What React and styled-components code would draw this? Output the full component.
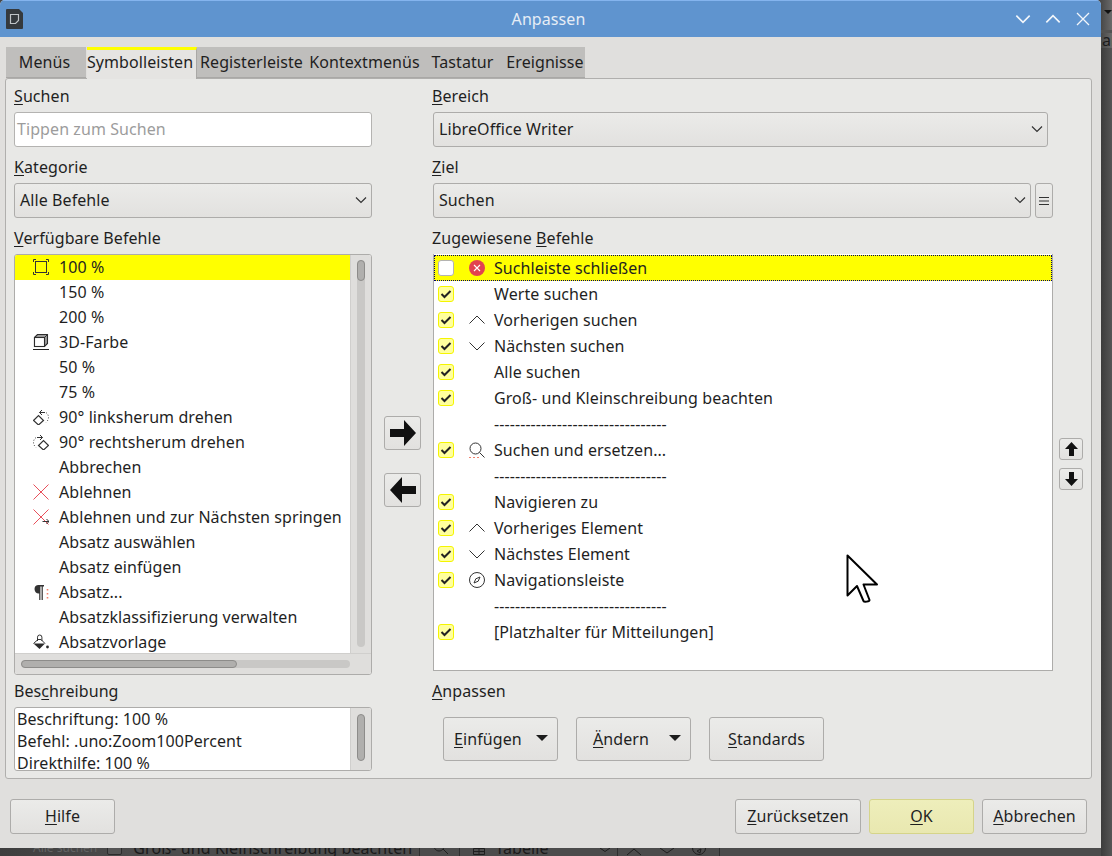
import React from 'react';
import styled, { createGlobalStyle } from 'styled-components';

const GlobalStyle = createGlobalStyle`
  html, body {
    margin: 0;
    padding: 0;
    width: 1112px;
    height: 856px;
    overflow: hidden;
    background: #474747;
    font-family: "Noto Sans", sans-serif;
    font-size: 16px;
    letter-spacing: 0.08px;
    color: #1f1f1f;
  }
`;

const Desktop = styled.div`
  display: grid;
  grid-template-columns: 1101px 11px;
  grid-template-rows: 848px 8px;
  width: 1112px;
  height: 856px;
  overflow: hidden;
`;

const Win = styled.div`
  display: flex;
  flex-direction: column;
  background: #e0dfdd;
  border-radius: 5px 5px 0 0;
  overflow: hidden;
`;

const TitleBar = styled.div`
  display: grid;
  grid-template-columns: 1fr auto 1fr;
  align-items: center;
  height: 37px;
  box-sizing: border-box;
  background: #5f94cf;
  border-top: 1px solid #84b4ee;
  padding: 0 10px 0 6px;
  color: #e6edf6;
`;

const TitleControls = styled.div`
  display: flex;
  justify-content: flex-end;
  gap: 14px;
`;

const Content = styled.div`
  flex: 1;
  display: flex;
  flex-direction: column;
  padding: 10px 9px 0 5px;
`;

const TabRow = styled.div`
  display: flex;
  height: 31px;
  padding-left: 1px;
  position: relative;
  z-index: 1;
`;

const Tab = styled.div`
  width: ${(p) => p.$w}px;
  height: ${(p) => (p.$active ? 32 : 31)}px;
  box-sizing: border-box;
  display: flex;
  justify-content: center;
  line-height: 28px;
  white-space: nowrap;
  background: ${(p) => (p.$active ? '#e5e4e2' : '#bfbebc')};
  border-top: ${(p) => (p.$active ? '3px solid #ffff00' : '0')};
  border-bottom: ${(p) => (p.$active ? '0' : '1px solid #a9a8a6')};
  border-right: ${(p) => (p.$active ? '1px solid #a9a8a6' : '0')};
  ${(p) => (p.$active ? 'line-height: 25px; margin-left: 1px;' : 'padding-top: 1px;')}
  padding-right: ${(p) => p.$nudge || 0}px;
  padding-left: ${(p) => p.$nudgeRight || 0}px;
`;

const Panel = styled.div`
  height: 701px;
  box-sizing: border-box;
  display: grid;
  grid-template-columns: 358px 60px 621px 38px;
  padding: 7px 0 0 8px;
  background: #e8e8e6;
  border: 1px solid #b0afad;
  border-radius: 3px;
`;

const Column = styled.div`
  display: flex;
  flex-direction: column;
  min-width: 0;
`;

const FieldLabel = styled.div`
  height: 20px;
  line-height: 20px;
  margin-top: ${(p) => p.$top ?? 10}px;
  margin-bottom: 6px;
`;

const Key = styled.span`
  text-decoration: underline;
  text-underline-offset: 2px;
  text-decoration-thickness: 1px;
`;

const SearchInput = styled.div`
  height: 35px;
  box-sizing: border-box;
  display: flex;
  align-items: center;
  padding: 0 0 2px 2px;
  background: #fff;
  border: 1px solid #b4b3b1;
  border-radius: 3px;
  color: #9c9c9c;
`;

const SelectRow = styled.div`
  display: flex;
  gap: 4px;
  margin-left: ${(p) => p.$indent || 0}px;
`;

const Select = styled.div`
  width: ${(p) => p.$w}px;
  height: 35px;
  box-sizing: border-box;
  display: flex;
  align-items: center;
  justify-content: space-between;
  padding: 0 4px 2px 5px;
  background: linear-gradient(#ebebe9, #e2e1df);
  border: 1px solid #adacaa;
  border-radius: 3px;
`;

const MenuButton = styled.div`
  width: 18px;
  height: 35px;
  box-sizing: border-box;
  display: flex;
  align-items: center;
  justify-content: center;
  background: linear-gradient(#ebebe9, #e2e1df);
  border: 1px solid #adacaa;
  border-radius: 3px;
`;

const CommandList = styled.div`
  height: 421px;
  box-sizing: border-box;
  display: flex;
  flex-direction: column;
  background: #fff;
  border: 1px solid #adacaa;
  border-radius: 3px;
  overflow: hidden;
`;

const ListBody = styled.div`
  flex: 1;
  display: flex;
  min-height: 0;
`;

const Rows = styled.div`
  flex: 1;
  min-width: 0;
  overflow: hidden;
`;

const CommandRow = styled.div`
  height: 25px;
  box-sizing: border-box;
  display: flex;
  align-items: center;
  white-space: nowrap;
  padding: 0 0 2px 18px;
  background: ${(p) => (p.$selected ? '#ffff00' : 'transparent')};
`;

const IconSlot = styled.span`
  width: 16px;
  height: 16px;
  flex: none;
  margin-right: 10px;
  display: flex;
  color: #333;
`;

const VTrack = styled.div`
  width: 21px;
  flex: none;
  box-sizing: border-box;
  padding: ${(p) => p.$pad || '5px 6px 6px'};
  background: #dfdedc;
  border-left: 1px solid #d0cfcd;
`;

const VGroove = styled.div`
  height: 100%;
  background: #c9c8c6;
  border-radius: 4px;
`;

const VThumb = styled.div`
  height: ${(p) => p.$h};
  box-sizing: border-box;
  background: #b0afad;
  border: 1px solid #8d8c8a;
  border-radius: 4px;
`;

const HTrack = styled.div`
  height: 21px;
  flex: none;
  box-sizing: border-box;
  padding: 6px 21px 6px 6px;
  background: #dfdedc;
  border-top: 1px solid #d0cfcd;
`;

const HGroove = styled.div`
  height: 100%;
  background: #c9c8c6;
  border-radius: 4px;
`;

const HThumb = styled.div`
  width: 216px;
  height: 100%;
  box-sizing: border-box;
  background: #b0afad;
  border: 1px solid #8d8c8a;
  border-radius: 4px;
`;

const DescriptionBox = styled.div`
  height: 64px;
  box-sizing: border-box;
  display: flex;
  background: #fff;
  border: 1px solid #adacaa;
  border-radius: 3px;
  overflow: hidden;
`;

const DescriptionText = styled.div`
  flex: 1;
  padding-left: 2px;
  line-height: 22px;
  white-space: nowrap;
  overflow: hidden;
`;

const Mover = styled.div`
  display: flex;
  flex-direction: column;
  gap: 23px;
  padding: 330px 0 0 12px;
`;

const ArrowButton = styled.div`
  width: 37px;
  height: 34px;
  box-sizing: border-box;
  display: flex;
  align-items: center;
  justify-content: center;
  background: linear-gradient(#ebebe9, #e2e1df);
  border: 1px solid #adacaa;
  border-radius: 3px;
`;

const Assigned = styled.div`
  position: relative;
  height: 417px;
  box-sizing: border-box;
  margin-left: 1px;
  padding-top: 1px;
  background: #fff;
  border: 1px solid #adacaa;
  border-top: 0;
  overflow: hidden;
`;

const AssignedRow = styled.div`
  height: 26px;
  box-sizing: border-box;
  display: flex;
  align-items: center;
  white-space: nowrap;
  padding-left: 4px;
  background: ${(p) => (p.$selected ? '#ffff00' : 'transparent')};
  ${(p) => p.$selected && 'outline: 1px dotted #00006a; outline-offset: -1px;'}
`;

const Check = styled.span`
  width: 16px;
  height: 16px;
  flex: none;
  box-sizing: border-box;
  margin-right: 15px;
  display: flex;
  align-items: center;
  justify-content: center;
  border-radius: 3px;
  background: ${(p) => (p.$on ? '#ffff9e' : '#fff')};
  border: 1px solid ${(p) => (p.$on ? '#f5f500' : '#b4b3b1')};
`;

const AssignedIcon = styled(IconSlot)`
  margin-right: 9px;
`;

const Separator = styled.span`
  margin-left: 56px;
`;

const Pointer = styled.svg`
  position: absolute;
  left: 412px;
  top: 300px;
`;

const ActionRow = styled.div`
  display: flex;
  gap: 18px;
  padding: 10px 0 0 11px;
`;

const ActionButton = styled.div`
  width: 115px;
  height: 44px;
  box-sizing: border-box;
  display: flex;
  align-items: center;
  justify-content: ${(p) => (p.$drop ? 'space-between' : 'center')};
  padding: ${(p) => (p.$drop ? `0 9px 0 ${p.$drop}px` : '0')};
  background: linear-gradient(#ebebe9, #e2e1df);
  border: 1px solid #adacaa;
  border-radius: 3px;
`;

const DropCaret = styled.span`
  width: 0;
  height: 0;
  border-left: 6px solid transparent;
  border-right: 6px solid transparent;
  border-top: 6px solid #1c1c1c;
  margin-bottom: 3px;
`;

const SidePad = styled.div`
  display: flex;
  flex-direction: column;
  gap: 8px;
  padding: 352px 0 0 6px;
`;

const SmallButton = styled.div`
  width: 24px;
  height: 22px;
  box-sizing: border-box;
  display: flex;
  align-items: center;
  justify-content: center;
  background: linear-gradient(#ebebe9, #e2e1df);
  border: 1px solid #adacaa;
  border-radius: 3px;
`;

const Footer = styled.div`
  display: flex;
  justify-content: space-between;
  padding: 20px 5px 0 5px;
`;

const FooterGroup = styled.div`
  display: flex;
  gap: 8px;
`;

const FooterButton = styled.div`
  width: ${(p) => p.$w}px;
  height: 35px;
  box-sizing: border-box;
  display: flex;
  align-items: center;
  justify-content: center;
  padding-bottom: 2px;
  background: ${(p) => (p.$primary ? 'linear-gradient(#eeeebb, #e9e8b0)' : 'linear-gradient(#ebebe9, #e2e1df)')};
  border: 1px solid ${(p) => (p.$primary ? '#d5d48a' : '#adacaa')};
  border-radius: 3px;
`;

const SideStrip = styled.div`
  grid-row: 1 / 3;
  grid-column: 2;
  display: flex;
  flex-direction: column;
  background: linear-gradient(90deg, #3c3c3c, #555);
  overflow: hidden;
`;

const SideTop = styled.div`
  height: 30px;
  background: linear-gradient(90deg, #484848, #6a6a6a);
  display: flex;
  justify-content: flex-end;
  padding: 10px 0 0 0;
  box-sizing: border-box;
`;

const SideCaret = styled.span`
  width: 0;
  height: 0;
  border-left: 4px solid transparent;
  border-right: 4px solid transparent;
  border-top: 4px solid #111;
`;

const SideBar = styled.div`
  height: 18px;
  box-sizing: border-box;
  background: linear-gradient(90deg, #484848, #6a6a6a);
  border-top: 3px solid #525252;
  color: #1c1c1c;
  line-height: 15px;
  padding-left: 1px;
  white-space: nowrap;
`;

const BottomStrip = styled.div`
  grid-row: 2;
  grid-column: 1;
  display: flex;
  align-items: flex-start;
  background: linear-gradient(90deg, #3e3e3e, #4c4c4c 12%, #4c4c4c);
  overflow: hidden;
  white-space: nowrap;
  color: #1a1a1a;
`;

const StripItem = styled.span`
  flex: none;
  display: flex;
  margin-left: ${(p) => p.$left}px;
  margin-top: ${(p) => p.$top ?? -11}px;
  line-height: 22px;
  ${(p) => p.$faded && 'color: #636363; font-size: 12px; letter-spacing: 0;'}
`;

const StripBox = styled.span`
  width: 15px;
  height: 16px;
  flex: none;
  box-sizing: border-box;
  margin: -9px 0 0 10px;
  background: #555;
  border: 1px solid #2c2c2c;
  border-radius: 2px;
`;

const StripDivider = styled.span`
  width: 1px;
  height: 8px;
  flex: none;
  margin-left: ${(p) => p.$left}px;
  background: #2f2f2f;
`;

const commands = [
  ['100 %', 'zoom'],
  ['150 %'],
  ['200 %'],
  ['3D-Farbe', 'cube'],
  ['50 %'],
  ['75 %'],
  ['90° linksherum drehen', 'rotl'],
  ['90° rechtsherum drehen', 'rotr'],
  ['Abbrechen'],
  ['Ablehnen', 'reject'],
  ['Ablehnen und zur Nächsten springen', 'rejectNext'],
  ['Absatz auswählen'],
  ['Absatz einfügen'],
  ['Absatz...', 'para'],
  ['Absatzklassifizierung verwalten'],
  ['Absatzvorlage', 'bucket'],
];

const DASHES = '-'.repeat(33);

const assigned = [
  { text: 'Suchleiste schließen', icon: 'closeRed', off: true },
  { text: 'Werte suchen' },
  { text: 'Vorherigen suchen', icon: 'up' },
  { text: 'Nächsten suchen', icon: 'down' },
  { text: 'Alle suchen' },
  { text: 'Groß- und Kleinschreibung beachten' },
  { sep: true },
  { text: 'Suchen und ersetzen...', icon: 'search' },
  { sep: true },
  { text: 'Navigieren zu' },
  { text: 'Vorheriges Element', icon: 'up' },
  { text: 'Nächstes Element', icon: 'down' },
  { text: 'Navigationsleiste', icon: 'compass' },
  { sep: true },
  { text: '[Platzhalter für Mitteilungen]' },
];

function Icon({ name }) {
  const line = { fill: 'none', stroke: '#333', strokeWidth: 1 };
  const red = { fill: 'none', stroke: '#e8505b', strokeWidth: 1 };
  const dotted = { fill: 'none', stroke: '#444', strokeWidth: 1, strokeDasharray: '1 1.8' };
  const body = {
    zoom: (
      <>
        <rect x="2.5" y="2.5" width="11" height="11" {...line} />
        <path d="M.5 3V.5H3M13 .5h2.5V3M15.5 13v2.5H13M3 15.5H.5V13" {...line} />
      </>
    ),
    cube: (
      <>
        <path d="M1.5 3.5l3-3h10v9l-3 3h-10z" fill="#9c9c9c" stroke="#2c2c2c" strokeWidth="1.1" />
        <rect x="1.5" y="3.5" width="10" height="9" fill="#fff" stroke="#2c2c2c" strokeWidth="1.1" />
        <path d="M11.5 3.5l3-3" {...line} />
        <path d="M0 15.5h16" fill="none" stroke="#222" strokeWidth="1.1" />
      </>
    ),
    rotl: (
      <>
        <path d="M.5 11.5 5.5 6.5l5 5-5 4.5z" fill="none" stroke="#333" strokeWidth="1.2" />
        <path d="M13 3.5C15 5 15.5 7 15.5 8.5 15.5 10.5 14.5 12 13 13.5" {...dotted} />
        <path d="M12 3.5H6.5M9 1 6.5 3.5 9 6" {...line} />
      </>
    ),
    rotr: (
      <>
        <path d="M15.5 11.5 10.5 6.5l-5 5 5 4.5z" fill="none" stroke="#333" strokeWidth="1.2" />
        <path d="M3 3.5C1 5 .5 7 .5 8.5.5 10.5 1.5 12 3 13.5" {...dotted} />
        <path d="M4 3.5h5.5M7 1l2.5 2.5L7 6" {...line} />
      </>
    ),
    reject: <path d="M.5.5l15 15M15.5.5l-15 15" {...red} />,
    rejectNext: (
      <>
        <path d="M.5.5l15 15M15.5.5l-15 15" {...red} />
        <path d="M9.5 12.5H16M13.5 10l2.5 2.5L13.5 15" {...line} />
      </>
    ),
    para: (
      <>
        <path d="M5 1h6v1.5H9.8V16H8.6V2.5H7.4V16H6.2V9.5A4.3 4.3 0 0 1 5 1z" fill="#333" />
        <path d="M14.5 5v1.5M14.5 9v1.5M14.5 13v1.5" fill="none" stroke="#f0826e" strokeWidth="1.6" />
      </>
    ),
    bucket: (
      <>
        <path d="M.5 9.5h11.5L6.5 15z" fill="#2b2b2b" />
        <path d="M.5 9.5 5 5.5h3l4 4" {...line} />
        <path d="M4.5 7V3.2a2.2 2.2 0 0 1 4.4 0V7" {...line} />
        <circle cx="14.5" cy="13" r="1.4" fill="#2b2b2b" />
      </>
    ),
    closeRed: (
      <>
        <circle cx="8" cy="8" r="8" fill="#e2434f" />
        <path d="M5 5l6 6M11 5l-6 6" fill="none" stroke="#fff" strokeWidth="1.1" />
      </>
    ),
    up: <path d="M.5 11.5 8 4l7.5 7.5" {...line} />,
    down: <path d="M.5 4.5 8 12l7.5-7.5" {...line} />,
    search: (
      <>
        <circle cx="6.5" cy="6.5" r="5.5" {...line} />
        <path d="M10.5 10.5l5 5" {...line} />
        <path d="M0 15.5h11" fill="none" stroke="#f0826e" strokeWidth="1" strokeDasharray="2 2" />
      </>
    ),
    compass: (
      <>
        <circle cx="8" cy="8" r="7.5" {...line} />
        <path d="M11 5 9.2 9.2 5 11l1.8-4.2z" {...line} />
      </>
    ),
  }[name];
  return (
    <svg width="16" height="16" viewBox="0 0 16 16">
      {body}
    </svg>
  );
}

function Chevron({ size = 12, color = '#333', dir = 'down', width = 1.2 }) {
  const d = dir === 'down' ? 'M1 3.5 6 8.5 11 3.5' : 'M1 8.5 6 3.5 11 8.5';
  return (
    <svg width={size} height={size} viewBox="0 0 12 12">
      <path d={d} fill="none" stroke={color} strokeWidth={width} />
    </svg>
  );
}

function CheckMark() {
  return (
    <svg width="12" height="10" viewBox="0 0 12 10">
      <path d="M1.5 5 4.5 8 10.5 2" fill="none" stroke="#222" strokeWidth="2" />
    </svg>
  );
}

function StripIcon({ left, top = 0, width = 14, d }) {
  return (
    <StripItem $left={left} $top={top}>
      <svg width={width} height="14" viewBox={`0 0 ${width} 14`}>
        <path d={d} fill="none" stroke="#1e1e1e" />
      </svg>
    </StripItem>
  );
}

function App() {
  return (
    <>
      <GlobalStyle />
      <Desktop>
        <Win>
          <TitleBar>
            <svg width="17" height="20" viewBox="0 0 17 20">
              <path d="M1 0h12l4 4v15a1 1 0 0 1-1 1H1a1 1 0 0 1-1-1V1a1 1 0 0 1 1-1z" fill="#35393d" />
              <path d="M4.5 5.5h8v6l-3 3h-5z" fill="none" stroke="#bfc3c6" strokeWidth="1.2" />
            </svg>
            <span>Anpassen</span>
            <TitleControls>
              <Chevron size={16} color="#f2f6fb" />
              <Chevron size={16} color="#f2f6fb" dir="up" />
              <svg width="16" height="16" viewBox="0 0 16 16">
                <path d="M2 2l12 12M14 2 2 14" fill="none" stroke="#f2f6fb" strokeWidth="1.3" />
              </svg>
            </TitleControls>
          </TitleBar>
          <Content>
            <TabRow>
              <Tab $w={80} $nudge={3}>Menüs</Tab>
              <Tab $w={110} $active $nudge={3}>Symbolleisten</Tab>
              <Tab $w={107} $nudgeRight={2}>Registerleiste</Tab>
              <Tab $w={121}>Kontextmenüs</Tab>
              <Tab $w={80} $nudge={5}>Tastatur</Tab>
              <Tab $w={80}>Ereignisse</Tab>
            </TabRow>
            <Panel>
              <Column>
                <FieldLabel $top={0}><Key>S</Key>uchen</FieldLabel>
                <SearchInput>Tippen zum Suchen</SearchInput>
                <FieldLabel><Key>K</Key>ategorie</FieldLabel>
                <Select $w={358}>
                  Alle Befehle
                  <Chevron />
                </Select>
                <FieldLabel><Key>V</Key>erfügbare Befehle</FieldLabel>
                <CommandList>
                  <ListBody>
                    <Rows>
                      {commands.map(([text, icon], i) => (
                        <CommandRow key={text} $selected={i === 0}>
                          <IconSlot>{icon && <Icon name={icon} />}</IconSlot>
                          {text}
                        </CommandRow>
                      ))}
                    </Rows>
                    <VTrack>
                      <VGroove>
                        <VThumb $h="21px" />
                      </VGroove>
                    </VTrack>
                  </ListBody>
                  <HTrack>
                    <HGroove>
                      <HThumb />
                    </HGroove>
                  </HTrack>
                </CommandList>
                <FieldLabel $top={6}>Bes<Key>c</Key>hreibung</FieldLabel>
                <DescriptionBox>
                  <DescriptionText>
                    Beschriftung: 100 %
                    <br />
                    Befehl: .uno:Zoom100Percent
                    <br />
                    Direkthilfe: 100 %
                  </DescriptionText>
                  <VTrack $pad="6px 6px 9px">
                    <VThumb $h="100%" />
                  </VTrack>
                </DescriptionBox>
              </Column>
              <Mover>
                <ArrowButton>
                  <svg width="26" height="26" viewBox="0 0 26 26">
                    <path d="M0 9h14V0l12 13-12 13v-9H0z" fill="#111" />
                  </svg>
                </ArrowButton>
                <ArrowButton>
                  <svg width="26" height="26" viewBox="0 0 26 26">
                    <path d="M26 9H12V0L0 13l12 13v-9h14z" fill="#111" />
                  </svg>
                </ArrowButton>
              </Mover>
              <Column>
                <FieldLabel $top={0}><Key>B</Key>ereich</FieldLabel>
                <SelectRow $indent={1}>
                  <Select $w={615}>
                    LibreOffice Writer
                    <Chevron />
                  </Select>
                </SelectRow>
                <FieldLabel><Key>Z</Key>iel</FieldLabel>
                <SelectRow $indent={1}>
                  <Select $w={598}>
                    Suchen
                    <Chevron />
                  </Select>
                  <MenuButton>
                    <svg width="10" height="8" viewBox="0 0 10 8">
                      <path d="M0 .5h10M0 4h10M0 7.5h10" fill="none" stroke="#333" />
                    </svg>
                  </MenuButton>
                </SelectRow>
                <FieldLabel>Zugewiesene <Key>B</Key>efehle</FieldLabel>
                <Assigned>
                  {assigned.map((row, i) =>
                    row.sep ? (
                      <AssignedRow key={i}>
                        <Separator>{DASHES}</Separator>
                      </AssignedRow>
                    ) : (
                      <AssignedRow key={i} $selected={i === 0}>
                        <Check $on={!row.off}>{!row.off && <CheckMark />}</Check>
                        <AssignedIcon>{row.icon && <Icon name={row.icon} />}</AssignedIcon>
                        {row.text}
                      </AssignedRow>
                    )
                  )}
                  <Pointer width="33" height="50" viewBox="0 0 33 50">
                    <path
                      d="M1.5 1.5v40l9.5-9.5 6.5 15c.6 1.4 6 .6 6-1l-6-15.5h13.5z"
                      fill="#fff"
                      stroke="#000"
                      strokeWidth="2"
                      strokeLinejoin="round"
                    />
                  </Pointer>
                </Assigned>
                <FieldLabel><Key>A</Key>npassen</FieldLabel>
                <ActionRow>
                  <ActionButton $drop={10}>
                    <span><Key>E</Key>infügen</span>
                    <DropCaret />
                  </ActionButton>
                  <ActionButton $drop={16}>
                    <span><Key>Ä</Key>ndern</span>
                    <DropCaret />
                  </ActionButton>
                  <ActionButton><span><Key>S</Key>tandards</span></ActionButton>
                </ActionRow>
              </Column>
              <SidePad>
                <SmallButton>
                  <svg width="13" height="14" viewBox="0 0 13 14">
                    <path d="M6.5 0 13 7H9v7H4V7H0z" fill="#111" />
                  </svg>
                </SmallButton>
                <SmallButton>
                  <svg width="13" height="14" viewBox="0 0 13 14">
                    <path d="M6.5 14 13 7H9V0H4v7H0z" fill="#111" />
                  </svg>
                </SmallButton>
              </SidePad>
            </Panel>
            <Footer>
              <FooterButton $w={105}><span><Key>H</Key>ilfe</span></FooterButton>
              <FooterGroup>
                <FooterButton $w={126}><span><Key>Z</Key>urücksetzen</span></FooterButton>
                <FooterButton $w={105} $primary><span><Key>O</Key>K</span></FooterButton>
                <FooterButton $w={105}><span><Key>A</Key>bbrechen</span></FooterButton>
              </FooterGroup>
            </Footer>
          </Content>
        </Win>
        <SideStrip>
          <SideTop><SideCaret /></SideTop>
          <SideBar>ar</SideBar>
        </SideStrip>
        <BottomStrip>
          <StripItem $left={33} $faded>Alle suchen</StripItem>
          <StripBox />
          <StripItem $left={11}>Groß- und Kleinschreibung beachten</StripItem>
          <StripDivider $left={7} />
          <StripIcon left={14} top={-7} d="M5 0a5 5 0 1 0 .1 0M9 8l5 5" />
          <StripDivider $left={11} />
          <StripIcon left={13} width={12} d="M.5 .5h11v6H.5zM.5 3.5h11M6 .5v6" />
          <StripItem $left={10}>Tabelle</StripItem>
          <StripIcon left={50} width={12} d="M1 0l5 3.5L11 0" />
          <StripDivider $left={6} />
          <StripIcon left={8} width={16} d="M1 7l7-6 7 6" />
          <StripIcon left={17} width={16} d="M1 0l7 5 7-5" />
          <StripIcon left={17} width={14} d="M.5 0a6.5 6.5 0 0 0 13 0M5 3l4-2-1 4z" />
          <StripDivider $left={13} />
        </BottomStrip>
      </Desktop>
    </>
  );
}

export default App;
